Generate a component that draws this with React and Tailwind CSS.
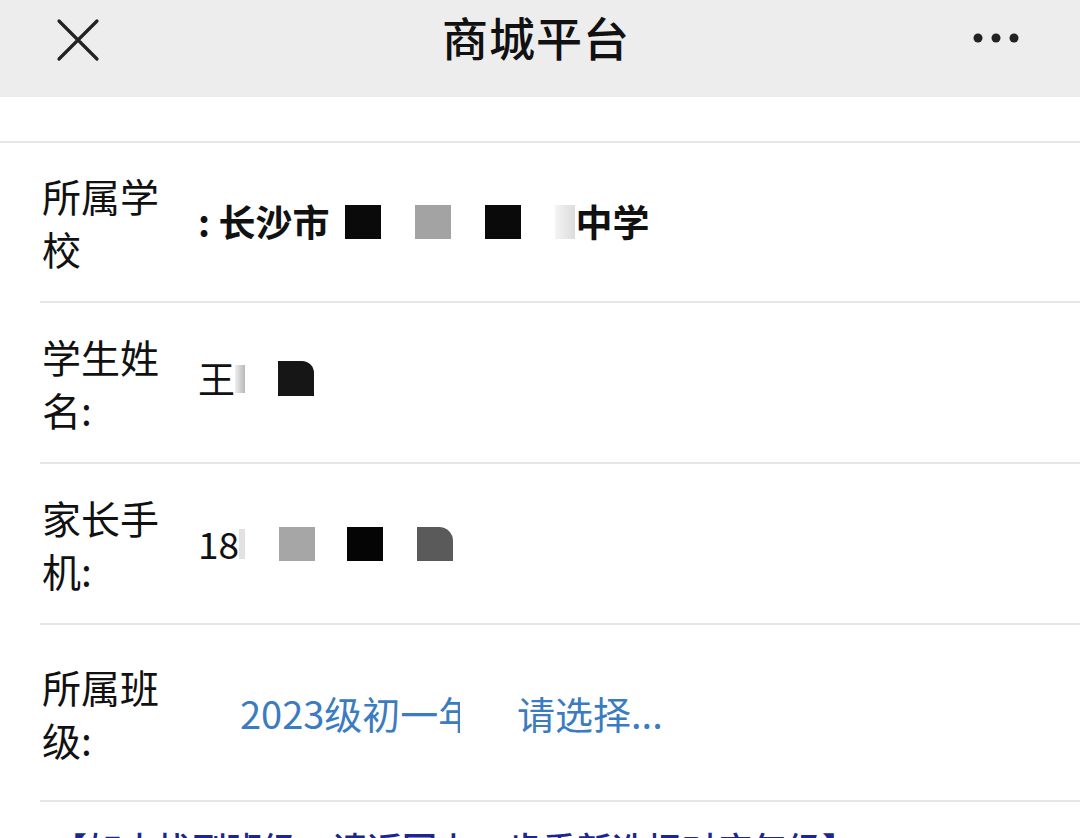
const font = { fontFamily: '"Noto Sans CJK SC", "Noto Sans", sans-serif' }

function Row({ label, children, h }) {
  return (
    <div className={`ml-10 flex items-center border-b-2 border-[#e6e6e6] ${h}`}>
      <div className="w-[122px] shrink-0 pl-[2px] text-[39px] leading-[53px] text-[#111]">{label}</div>
      <div className="ml-[36px] flex items-center">{children}</div>
    </div>
  )
}

function Sq({ c, className = '' }) {
  return <span className={`inline-block h-[34px] w-[36px] ${c} ${className}`} />
}

export default function App() {
  return (
    <div className="w-[1080px] h-[838px] overflow-hidden bg-white" style={font}>
      {/* title bar */}
      <div className="h-[97px] bg-[#ededed] flex items-center justify-between px-[56px]">
        <svg width="44" height="44" viewBox="0 0 44 44" className="-mt-[18px]">
          <path d="M3 3L41 41M41 3L3 41" stroke="#222" strokeWidth="3.2" strokeLinecap="round" />
        </svg>
        <div className="-mt-[24px] text-[46px] font-medium text-[#111] tracking-[1px]">商城平台</div>
        <svg width="52" height="12" viewBox="0 0 52 12" className="-mt-[22px]">
          <circle cx="6" cy="6" r="4.5" fill="#222" />
          <circle cx="24" cy="6" r="4.5" fill="#222" />
          <circle cx="42" cy="6" r="4.5" fill="#222" />
        </svg>
      </div>

      <div className="h-[46px] border-b-2 border-[#e6e6e6]" />

      <Row label="所属学校" h="h-[160px]">
        <span className="text-[37px] font-semibold text-[#111]">:&nbsp;长沙市</span>
        <Sq c="bg-[#0a0a0a]" className="ml-[16px]" />
        <Sq c="bg-[#a3a3a3]" className="ml-[34px]" />
        <Sq c="bg-[#0a0a0a]" className="ml-[34px]" />
        <span className="ml-[34px] inline-block h-[34px] w-[20px] bg-gradient-to-r from-[#f4f4f4] to-[#dcdcdc]" />
        <span className="text-[37px] font-semibold text-[#111]">中学</span>
      </Row>

      <Row label="学生姓名:" h="h-[161px]">
        <div className="flex items-center -mt-[8px]">
          <span className="text-[37px] text-[#111]">王</span>
          <span className="inline-block h-[28px] w-[10px] bg-gradient-to-r from-[#eeeeee] to-[#b8b8b8]" />
          <span className="ml-[33px] inline-block h-[35px] w-[36px] rounded-tr-[12px] bg-[#161616]" />
        </div>
      </Row>

      <Row label="家长手机:" h="h-[161px]">
        <span className="text-[37px] text-[#111]">18</span>
        <span className="inline-block h-[30px] w-[6px] bg-[#e2e2e2]" />
        <Sq c="bg-[#a6a6a6]" className="ml-[34px]" />
        <Sq c="bg-[#050505]" className="ml-[32px]" />
        <Sq c="bg-[#5a5a5a]" className="ml-[34px] rounded-tr-[14px]" />
      </Row>

      <Row label="所属班级:" h="h-[177px]">
        <span className="ml-[42px] inline-block w-[220px] overflow-hidden whitespace-nowrap text-[38px] text-[#3b7cc1]">2023级初一年级</span>
        <span className="ml-[57px] text-[38px] text-[#3b7cc1]">请选择...</span>
      </Row>

      <div className="pl-[52px] pt-[20px] whitespace-nowrap text-[35px] font-medium text-[#1c2690]">
        【如未找到班级，请返回上一步重新选择对应年级】
      </div>
    </div>
  )
}
